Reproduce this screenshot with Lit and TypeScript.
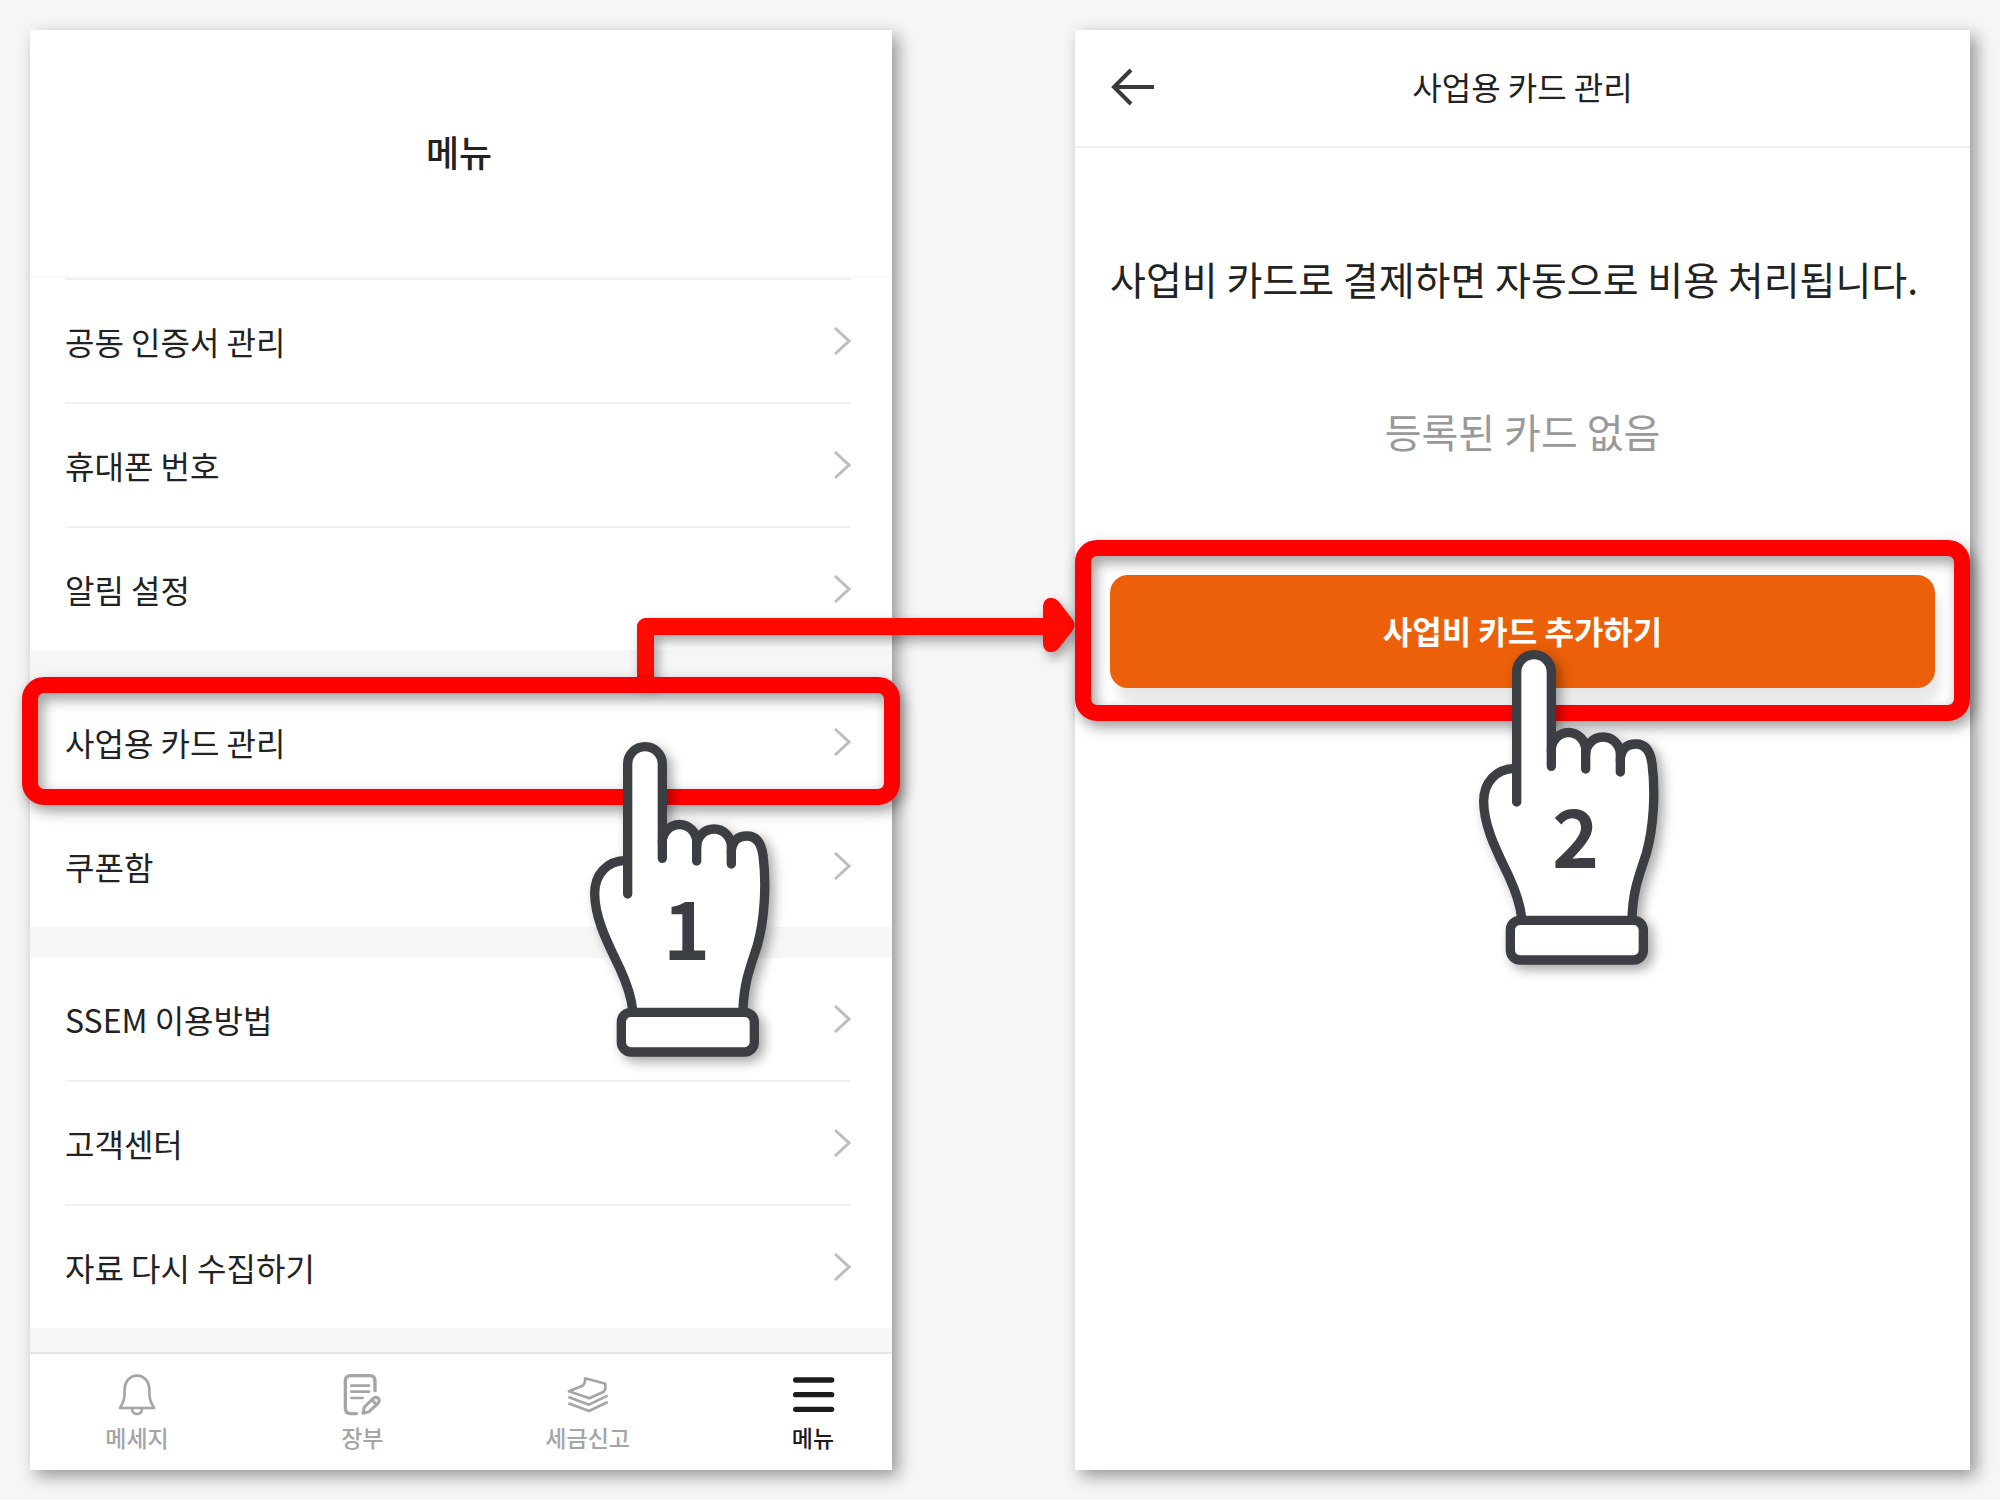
import { LitElement, html, svg, css, nothing } from "lit";
import { customElement, property } from "lit/decorators.js";

interface MenuItem {
  label: string;
  marked?: boolean;
}

const MENU_GROUPS: MenuItem[][] = [
  [{ label: "공동 인증서 관리" }, { label: "휴대폰 번호" }, { label: "알림 설정" }],
  [{ label: "사업용 카드 관리", marked: true }, { label: "쿠폰함" }],
  [{ label: "SSEM 이용방법" }, { label: "고객센터" }, { label: "자료 다시 수집하기" }],
];

const bell = svg`<svg class="tab-icon" viewBox="346 216 132 132" aria-hidden="true">
  <g fill="none" stroke="currentColor" stroke-width="8" stroke-linejoin="round">
    <path d="M361 324C372 306 375 296 375 270C375 243 392 227 412 227C432 227 449 243 449 270C449 296 452 306 463 324Z"/>
    <path d="M397 327C398 347 426 347 427 327"/>
  </g></svg>`;

const ledger = svg`<svg class="tab-icon" viewBox="1022 216 132 132" aria-hidden="true">
  <g fill="none" stroke="currentColor" stroke-width="10" stroke-linecap="round" stroke-linejoin="round">
    <path d="M1071 341H1054Q1038 341 1038 325V243Q1038 227 1054 227H1111Q1127 227 1127 243V272"/>
    <path stroke-width="8" d="M1056 257H1109M1056 275H1109M1056 294H1090"/>
    <path stroke-width="9" d="M1091 340L1095 321L1122 295Q1130 289 1137 295Q1143 302 1136 310L1109 335ZM1118 300L1130 313"/>
  </g></svg>`;

const papers = svg`<svg class="tab-icon" viewBox="320 216 132 132" aria-hidden="true">
  <g fill="none" stroke="currentColor" stroke-width="8" stroke-linejoin="round">
    <path d="M377 235L438 251V267Q436 273 430 277L390 295L329 274L368 258Q378 252 377 235Z"/>
    <path d="M327 291L389 314L445 287M327 310L389 333L445 306"/>
  </g></svg>`;

const bars = svg`<svg class="tab-icon" viewBox="995 216 132 132" aria-hidden="true">
  <path d="M1009 240H1117M1009 284H1117M1009 328H1117" stroke="currentColor" stroke-width="16" stroke-linecap="round"/>
</svg>`;

const TABS = [
  { label: "메세지", icon: bell, current: false },
  { label: "장부", icon: ledger, current: false },
  { label: "세금신고", icon: papers, current: false },
  { label: "메뉴", icon: bars, current: true },
];

@customElement("step-hand")
export class StepHand extends LitElement {
  @property({ type: Number }) step = 1;

  static styles = css`
    :host {
      display: block;
      width: 260px;
      height: 360px;
      pointer-events: none;
    }
    svg {
      display: block;
      width: 100%;
      height: 100%;
      overflow: visible;
      filter: drop-shadow(5px 5px 6px rgba(0, 0, 0, 0.35));
    }
    .step {
      font: 700 240px "Noto Sans CJK KR", sans-serif;
      fill: #3b3e43;
      text-anchor: middle;
    }
  `;

  render() {
    return html`<svg viewBox="0 0 780 1080" role="img" aria-label="${this.step}">
      <path
        fill="#fff"
        d="M203 422V132a52 52 0 0 1 104 0V366a51 52 0 0 1 103 13a52 52 0 0 1 104 13C520 335 602 330 611 415C620 500 614 600 592 672C570 740 552 790 549 870H218C214 830 200 800 178 752C150 690 104 610 104 520C104 455 150 422 203 422Z"
      />
      <g fill="none" stroke="#3b3e43" stroke-width="28" stroke-linecap="round" stroke-linejoin="round">
        <path d="M203 522V132a52 52 0 0 1 104 0V415" />
        <path d="M307 366a51 52 0 0 1 103 0V423" />
        <path d="M410 379a52 52 0 0 1 104 0V432" />
        <path d="M514 396C515 364 532 348 561 348C590 348 604 370 609 406C620 490 614 600 592 676C570 745 552 785 549 870" />
        <path d="M196 421C140 423 104 464 104 520C104 600 150 682 180 746C202 794 214 830 218 870" />
        <rect x="184" y="877" width="399" height="119" rx="29" fill="#fff" />
      </g>
      <text class="step" x="380" y="719">${this.step}</text>
    </svg>`;
  }
}

@customElement("app-root")
export class AppRoot extends LitElement {
  static styles = css`
    :host {
      display: block;
      font-family: "Noto Sans CJK KR", "Noto Sans", sans-serif;
      font-size: 32px;
      line-height: 48px;
      color: #222;
      background: #f6f6f6;
    }
    * {
      box-sizing: border-box;
    }
    a {
      color: inherit;
      text-decoration: none;
    }
    h1,
    h2,
    p,
    ul {
      margin: 0;
      padding: 0;
      font-weight: 400;
      font-size: inherit;
    }
    ul {
      list-style: none;
    }
    .page {
      display: grid;
      grid-template-columns: 862fr 895fr;
      gap: 183px;
      padding: 30px;
      min-height: 100vh;
    }
    .phone {
      display: flex;
      flex-direction: column;
      background: #fff;
      box-shadow: 6px 6px 16px rgba(0, 0, 0, 0.4);
    }

    .menu-head {
      display: flex;
      align-items: center;
      justify-content: center;
      height: 248px;
      padding: 0 4px 4px 0;
      border-bottom: 2px solid #f9f9f9;
    }
    .menu-title {
      font-size: 36px;
      font-weight: 500;
    }
    .groups {
      display: flex;
      flex-direction: column;
      gap: 31px;
      padding-bottom: 24px;
      background: #f6f6f6;
    }
    .group {
      background: #fff;
    }
    .row {
      position: relative;
      padding: 0 41px 0 35px;
    }
    .row-link {
      display: flex;
      align-items: center;
      justify-content: space-between;
      height: 122px;
    }
    .row + .row .row-link,
    .group:first-child .row-link {
      height: 124px;
      border-top: 2px solid #f0f0f0;
    }
    .chevron {
      width: 18px;
      height: 30px;
    }
    .tabs {
      display: flex;
      justify-content: space-between;
      padding: 18px 35px 15px 63px;
      border-top: 2px solid #e5e5e5;
      flex: 1;
    }
    .tab {
      display: flex;
      flex-direction: column;
      align-items: center;
      gap: 4px;
      width: 88px;
      font-size: 23px;
      line-height: 34px;
      font-weight: 500;
      color: #a5a5a5;
    }
    .tab.current {
      color: #1c1c1c;
    }
    .tab-icon {
      width: 44px;
      height: 44px;
    }

    .card-head {
      display: grid;
      grid-template-columns: 44px 1fr 44px;
      align-items: center;
      height: 118px;
      padding: 0 35px 4px;
      border-bottom: 2px solid #efefef;
      text-align: center;
    }
    .back {
      display: block;
      width: 44px;
      height: 44px;
      padding: 0;
      border: 0;
      background: none;
      cursor: pointer;
    }
    .back svg {
      display: block;
    }
    .card-body {
      padding: 100px 35px 60px;
    }
    .lead {
      font-size: 39px;
      line-height: 60px;
    }
    .empty {
      margin: 93px 0 114px;
      font-size: 40px;
      line-height: 60px;
      text-align: center;
      color: #999;
    }
    .action {
      position: relative;
    }
    .add {
      display: block;
      width: 100%;
      height: 113px;
      padding: 0 0 4px;
      border: 0;
      border-radius: 18px;
      background: #eb6009;
      box-shadow: 6px 14px 8px rgba(0, 0, 0, 0.09);
      color: #fff;
      font: inherit;
      font-weight: 700;
      cursor: pointer;
    }

    .mark {
      position: absolute;
      z-index: 1;
      border: 16px solid #f00;
      border-radius: 22px;
      filter: drop-shadow(4px 6px 7px rgba(0, 0, 0, 0.4));
      pointer-events: none;
    }
    .row .mark {
      inset: -4px -8px -2px;
    }
    .action .mark {
      inset: -35px -35px -33px;
    }
    .connector {
      position: absolute;
      left: 607px;
      right: -183px;
      top: -63px;
      height: 66px;
      filter: drop-shadow(4px 6px 6px rgba(0, 0, 0, 0.35));
      pointer-events: none;
    }
    .shaft {
      height: 100%;
      margin-right: 28px;
      border: solid #ff0a00;
      border-width: 17px 0 0 17px;
      border-top-left-radius: 9px;
    }
    .tip {
      position: absolute;
      right: 0;
      top: -20px;
      width: 32px;
      height: 54px;
    }
    step-hand {
      position: absolute;
      z-index: 2;
    }
    .row step-hand {
      left: 530px;
      top: 39px;
    }
    .action step-hand {
      left: calc(50% - 74px);
      top: 53px;
    }
  `;

  private row(item: MenuItem) {
    return html`<li class="row">
      <a class="row-link" href="#">
        <span>${item.label}</span>
        <svg class="chevron" viewBox="0 0 18 30" aria-hidden="true">
          <path d="M2 2L16 15L2 28" fill="none" stroke="#bdbdbd" stroke-width="3" />
        </svg>
      </a>
      ${item.marked
        ? html`<div class="connector">
              <div class="shaft"></div>
              <svg class="tip" viewBox="0 0 32 54" aria-hidden="true">
                <path
                  fill="#ff0a00"
                  d="M0 9C0 -1 10 -3 16 4L30 22Q33 27 30 32L16 50C10 57 0 55 0 45Z"
                />
              </svg>
            </div>
            <div class="mark"></div>
            <step-hand .step=${1}></step-hand>`
        : nothing}
    </li>`;
  }

  render() {
    return html`<main class="page">
      <section class="phone">
        <header class="menu-head"><h1 class="menu-title">메뉴</h1></header>
        <div class="groups">
          ${MENU_GROUPS.map(
            (group) => html`<ul class="group">
              ${group.map((item) => this.row(item))}
            </ul>`
          )}
        </div>
        <nav class="tabs">
          ${TABS.map(
            (tab) => html`<a class="tab ${tab.current ? "current" : ""}" href="#">
              ${tab.icon}<span>${tab.label}</span>
            </a>`
          )}
        </nav>
      </section>

      <section class="phone">
        <header class="card-head">
          <button class="back" type="button" aria-label="뒤로">
            <svg width="44" height="44" viewBox="0 0 44 44" aria-hidden="true">
              <path
                d="M21 6L4 23L21 40M4 23H44"
                fill="none"
                stroke="#3a3a3a"
                stroke-width="4"
              />
            </svg>
          </button>
          <h2>사업용 카드 관리</h2>
        </header>
        <div class="card-body">
          <p class="lead">사업비 카드로 결제하면 자동으로 비용 처리됩니다.</p>
          <p class="empty">등록된 카드 없음</p>
          <div class="action">
            <button class="add" type="button">사업비 카드 추가하기</button>
            <div class="mark"></div>
            <step-hand .step=${2}></step-hand>
          </div>
        </div>
      </section>
    </main>`;
  }
}
